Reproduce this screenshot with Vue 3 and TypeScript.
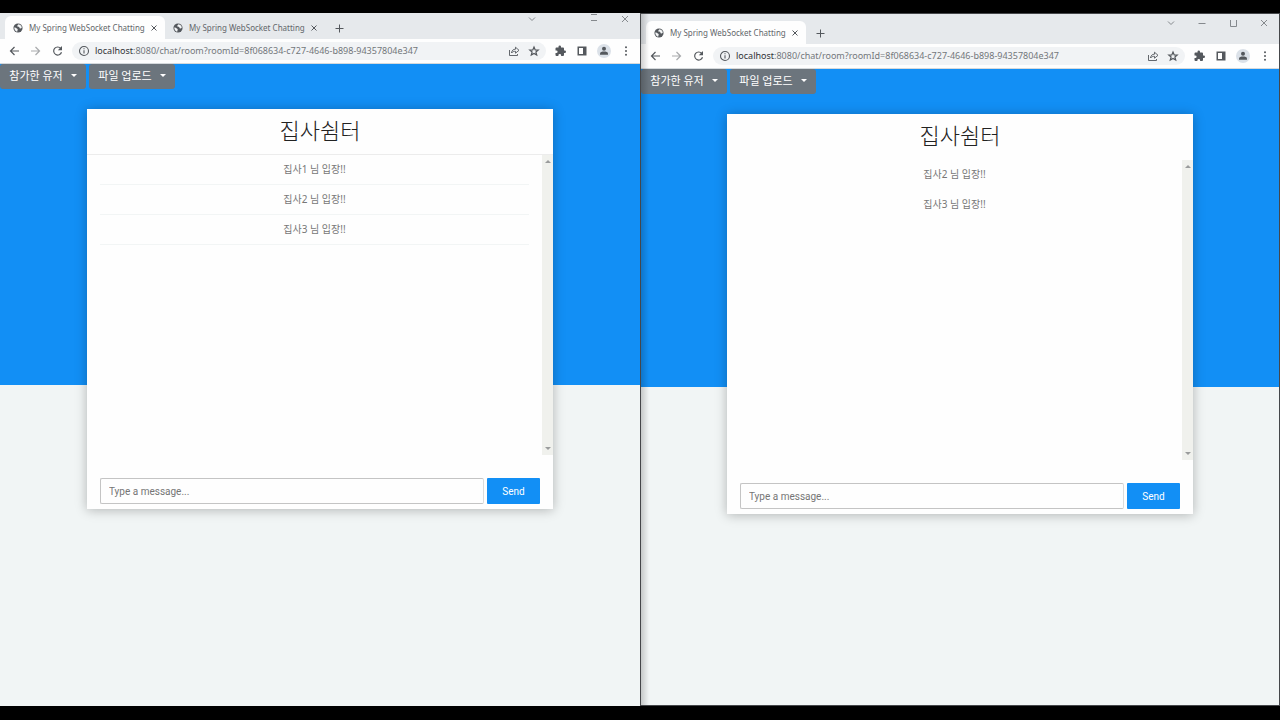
<script setup lang="ts">
import { ref } from 'vue'

interface ChatWindow {
  id: string
  framed: boolean
  tabs: string[]
  messages: string[]
}

const title = 'My Spring WebSocket Chatting'
const host = 'localhost'
const path = ':8080/chat/room?roomId=8f068634-c727-4646-b898-94357804e347'
const menus = ['참가한 유저', '파일 업로드']

const windows: ChatWindow[] = [
  {
    id: 'first',
    framed: false,
    tabs: [title, title],
    messages: ['집사1 님 입장!!', '집사2 님 입장!!', '집사3 님 입장!!'],
  },
  {
    id: 'second',
    framed: true,
    tabs: [title],
    messages: ['집사2 님 입장!!', '집사3 님 입장!!'],
  },
]

const drafts = ref<Record<string, string>>({ first: '', second: '' })
</script>

<template>
  <main class="desktop">
    <section v-for="w in windows" :key="w.id" class="window" :class="{ framed: w.framed }">
      <header class="tabstrip">
        <div class="tabs">
          <div v-for="(tab, i) in w.tabs" :key="i" class="tab" :class="{ active: i === 0 }">
            <svg class="favicon" viewBox="0 0 24 24" aria-hidden="true">
              <circle cx="12" cy="12" r="11" fill="#54585d" />
              <path d="M3 11c3 0 4 1 6 2s3 2 2 4l-1 4C6 20 3 16 3 11zM13 3c-1 3-4 3-3 5s4 0 5 2 1 3 3 3 3-1 3-2c0-4-3-7-8-8z" fill="#f4f6f7" />
            </svg>
            <a href="#" class="tab-title">{{ tab }}</a>
            <button type="button" class="plain" aria-label="Close tab">
              <svg viewBox="0 0 12 12"><path d="M3.500 3.500l5 5M8.500 3.500l-5 5" /></svg>
            </button>
          </div>
          <button type="button" class="plain new-tab" aria-label="New tab">
            <svg viewBox="0 0 12 12"><path d="M6.500 2.500v8M2.500 6.500h8" /></svg>
          </button>
        </div>
        <div class="controls">
          <button type="button" class="plain" aria-label="Search tabs">
            <svg viewBox="0 0 12 12"><path d="M3 4.500l3 3 3-3" /></svg>
          </button>
          <button type="button" class="plain minimize" aria-label="Minimize">
            <svg viewBox="0 0 12 12"><path d="M2.500 6.500h7" /></svg>
          </button>
          <button type="button" class="plain" aria-label="Maximize">
            <svg viewBox="0 0 12 12">
              <path v-if="w.framed" d="M3.500 3v6.500h6V3" />
              <path v-else d="M3 1.500h6M3 7.500h6" />
            </svg>
          </button>
          <button type="button" class="plain" aria-label="Close window">
            <svg viewBox="0 0 12 12"><path d="M3 3l6 6M9 3L3 9" /></svg>
          </button>
        </div>
      </header>

      <nav class="toolbar">
        <div class="group">
          <button type="button" class="plain" aria-label="Back">
            <svg viewBox="0 0 12 12"><path d="M11 6H2.500M6.500 2l-4 4 4 4" /></svg>
          </button>
          <button type="button" class="plain faded" aria-label="Forward">
            <svg viewBox="0 0 12 12"><path d="M1 6h8.500M5.500 2l4 4-4 4" /></svg>
          </button>
          <button type="button" class="plain" aria-label="Reload">
            <svg viewBox="0 0 12 12">
              <path d="M8.800 3.500A4 4 0 1 0 9.500 7.200" />
              <path d="M10 1v4.200H5.800z" class="solid" />
            </svg>
          </button>
        </div>
        <div class="address">
          <svg class="info" viewBox="0 0 12 12" aria-hidden="true">
            <circle cx="6" cy="6" r="4.500" />
            <path d="M6 5.200v3.200M6 3.200v1" />
          </svg>
          <a href="#" class="url"><span class="host">{{ host }}</span>{{ path }}</a>
          <div class="group tight">
            <button type="button" class="plain thin" aria-label="Share">
              <svg viewBox="0 0 12 12"><path d="M1.500 5v5.500h8V9M3.500 8c.3-2.600 1.800-3.800 4-3.800V2.200L11 5.300 7.500 8.200V6.300C5.800 6.300 4.500 6.700 3.500 8z" /></svg>
            </button>
            <button type="button" class="plain" aria-label="Bookmark">
              <svg viewBox="0 0 12 12"><path d="M6 2l1.200 2.900 3 .2-2.300 1.900.8 3L6 8.400 3.300 10l.8-3-2.300-1.900 3-.2z" /></svg>
            </button>
          </div>
        </div>
        <div class="group">
          <button type="button" class="plain" aria-label="Extensions">
            <svg viewBox="0 0 24 24"><path class="solid" d="M21.500 11H20V7a2 2 0 0 0-2-2h-4V3.500a2.500 2.500 0 0 0-5 0V5H5a2 2 0 0 0-2 2v3.800h1.500a2.700 2.700 0 0 1 0 5.400H3V20a2 2 0 0 0 2 2h3.800v-1.500a2.700 2.700 0 0 1 5.400 0V22H18a2 2 0 0 0 2-2v-4h1.500a2.500 2.500 0 0 0 0-5z" /></svg>
          </button>
          <button type="button" class="plain" aria-label="Side panel">
            <svg viewBox="0 0 12 12"><path class="solid" fill-rule="evenodd" d="M1.500 1.500h9v9h-9zM3 3v6h4V3z" /></svg>
          </button>
          <button type="button" class="plain avatar" aria-label="Profile">
            <svg viewBox="0 0 14 14">
              <circle class="disc" cx="7" cy="7" r="7" />
              <circle class="solid" cx="7" cy="4.800" r="2" />
              <path class="solid" d="M3 10.800V9.600C3 8.200 5 7.600 7 7.600s4 .6 4 2v1.200z" />
            </svg>
          </button>
          <button type="button" class="plain" aria-label="More">
            <svg viewBox="0 0 12 12">
              <circle class="solid" cx="6" cy="2.200" r="1" />
              <circle class="solid" cx="6" cy="6" r="1" />
              <circle class="solid" cx="6" cy="9.800" r="1" />
            </svg>
          </button>
        </div>
      </nav>

      <div class="page">
        <div class="menus">
          <button v-for="m in menus" :key="m" type="button" class="menu">
            {{ m }}<span class="caret"></span>
          </button>
        </div>
        <article class="chat">
          <h1>집사쉼터</h1>
          <div class="log">
            <ul>
              <li v-for="m in w.messages" :key="m">{{ m }}</li>
            </ul>
            <div class="scrollbar" aria-hidden="true">
              <span class="up"></span>
              <span class="down"></span>
            </div>
          </div>
          <form @submit.prevent>
            <input v-model="drafts[w.id]" type="text" placeholder="Type a message..." aria-label="Message" />
            <button type="submit">Send</button>
          </form>
        </article>
      </div>
    </section>
  </main>
</template>

<style>
body {
  margin: 0;
  background: #000;
}
</style>

<style scoped>
* {
  box-sizing: border-box;
}

.desktop {
  display: grid;
  grid-template-columns: 1fr 1fr;
  min-height: 100vh;
  padding: 13px 0 14px;
  background: #000;
  font-family: "Noto Sans", "Noto Sans CJK KR", sans-serif;
}

.window {
  position: relative;
  display: flex;
  flex-direction: column;
  min-width: 0;
  background: #f1f5f5;
}

.framed {
  border: 1px solid #45474a;
}

.framed::before {
  content: "";
  position: absolute;
  inset: 0 auto 0 0;
  width: 8px;
  background: linear-gradient(to right, rgba(0, 0, 0, 0.18), transparent);
  pointer-events: none;
}

button {
  font-family: inherit;
  cursor: pointer;
}

.plain {
  display: block;
  flex: none;
  width: 12px;
  height: 12px;
  padding: 0;
  border: 0;
  background: none;
}

svg {
  display: block;
  width: 100%;
  height: 100%;
  fill: none;
  stroke: #54585d;
  stroke-width: 1.2;
}

.solid {
  fill: #54585d;
  stroke: none;
}

.disc {
  fill: #dbe1e8;
  stroke: none;
}

.faded {
  opacity: 0.5;
}

.thin svg {
  stroke-width: 0.9;
}

.tabstrip {
  display: flex;
  justify-content: space-between;
  height: 26px;
  padding-left: 5px;
  background: #e6e9ec;
}

.framed .tabstrip {
  height: 30px;
}

.tabs {
  display: flex;
  align-items: flex-end;
}

.tab {
  display: flex;
  align-items: center;
  width: 160px;
  height: 23px;
  padding: 0 5px 0 8px;
  border-radius: 6px 6px 0 0;
}

.active {
  background: #fefefe;
}

.favicon {
  flex: none;
  width: 10px;
  height: 10px;
  stroke: none;
}

.tab-title {
  flex: 1;
  margin-left: 6px;
  color: #63676b;
  font-size: 8px;
  line-height: 12px;
  text-decoration: none;
  white-space: nowrap;
}

.tab .plain svg,
.new-tab svg {
  stroke-width: 1;
}

.new-tab {
  margin: 0 0 5px 8px;
}

.controls {
  display: flex;
  gap: 19px;
  padding: 0 9px 0 0;
}

.framed .controls {
  padding-top: 3px;
}

.controls svg {
  stroke: #85898d;
  stroke-width: 1;
}

.window:not(.framed) .minimize {
  opacity: 0;
}

.toolbar {
  display: flex;
  align-items: center;
  gap: 8px;
  height: 25px;
  padding: 0 8px;
  border-bottom: 1px solid #d5d9dc;
  background: #fefefe;
}

.group {
  display: flex;
  align-items: center;
  gap: 10px;
}

.tight {
  gap: 8px;
}

.avatar {
  width: 14px;
  height: 14px;
  margin: 0 -1px;
}

.address {
  display: flex;
  flex: 1;
  align-items: center;
  min-width: 0;
  height: 18px;
  padding: 0 6px;
  border-radius: 9px;
  background: #f1f3f5;
}

.info {
  flex: none;
  width: 12px;
  height: 12px;
  stroke-width: 1.1;
}

.url {
  flex: 1;
  min-width: 0;
  margin-left: 5px;
  overflow: hidden;
  color: #73777b;
  font-size: 9px;
  line-height: 14px;
  text-decoration: none;
  white-space: nowrap;
}

.host {
  color: #303236;
}

.page {
  flex: 1;
  background: linear-gradient(#128ff5 50%, #f1f5f5 50%);
}

.menus {
  display: flex;
  gap: 3px;
}

.menu {
  display: flex;
  align-items: center;
  justify-content: center;
  gap: 8px;
  width: 86px;
  height: 25px;
  padding: 0 0 2px;
  border: 0;
  border-radius: 3px;
  background: #6c757d;
  color: #fff;
  font-size: 11px;
  line-height: 16px;
}

.caret {
  border: 3px solid transparent;
  border-top-color: #fff;
  border-bottom: 0;
}

.chat {
  width: 466px;
  max-width: 100%;
  margin: 20px auto 0;
  background: #fefefe;
  box-shadow: 0 1px 11px rgba(0, 0, 0, 0.27);
}

h1 {
  margin: 0;
  padding: 5px 0 8px;
  border-bottom: 1px solid #ececec;
  color: #222;
  font-size: 22px;
  font-weight: 300;
  line-height: 32px;
  text-align: center;
}

.log {
  display: flex;
  height: 300px;
}

ul {
  flex: 1;
  margin: 0;
  padding: 0 13px;
  list-style: none;
}

li {
  height: 30px;
  border-bottom: 1px solid #f2f5f5;
  color: #777;
  font-size: 10px;
  line-height: 29px;
  text-align: center;
}

.framed h1,
.framed li {
  border-color: transparent;
}

.scrollbar {
  display: flex;
  flex-direction: column;
  justify-content: space-between;
  align-items: center;
  width: 11px;
  padding: 5px 0;
  background: #f0f1ed;
}

.up,
.down {
  border: 3px solid transparent;
}

.up {
  border-top: 0;
  border-bottom-color: #9a9c9c;
}

.down {
  border-bottom: 0;
  border-top-color: #9a9c9c;
}

form {
  display: flex;
  gap: 3px;
  padding: 23px 13px 5px;
}

input {
  flex: 1;
  min-width: 0;
  height: 26px;
  padding: 0 8px;
  border: 1px solid #c4c4c4;
  border-right-color: #dcdcdc;
  border-radius: 2px;
  background: #fefefe;
  color: #333;
  font-family: Roboto, sans-serif;
  font-size: 10px;
}

input::placeholder {
  color: #757575;
  opacity: 1;
}

form button {
  width: 53px;
  height: 26px;
  padding: 0;
  border: 0;
  border-radius: 1px;
  background: #128ff5;
  color: #fff;
  font-family: Roboto, sans-serif;
  font-size: 10px;
}
</style>
